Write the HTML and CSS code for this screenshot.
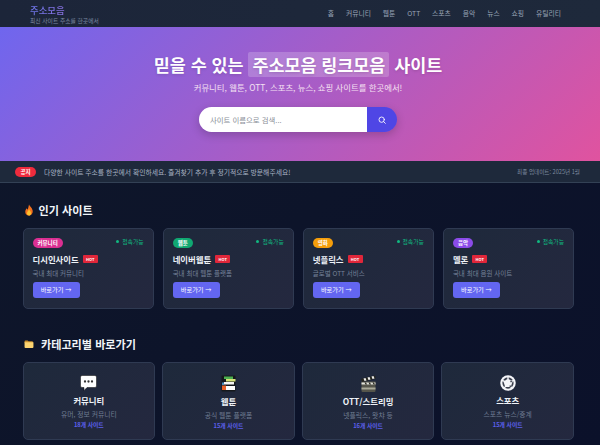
FILE: index.html
```html
<!DOCTYPE html>
<html lang="ko">
<head>
<meta charset="utf-8">
<title>주소모음</title>
<link rel="stylesheet" href="styles.css">
</head>
<body>
<header class="site-header">
  <div class="brand">
    <div class="brand-name">주소모음</div>
    <div class="brand-sub">최신 사이트 주소를 한곳에서</div>
  </div>
  <nav class="nav">
    <a>홈</a><a>커뮤니티</a><a>웹툰</a><a>OTT</a><a>스포츠</a><a>음악</a><a>뉴스</a><a>쇼핑</a><a>유틸리티</a>
  </nav>
</header>
<section class="hero">
  <h1 class="hero-title">믿을 수 있는 <span class="hl">주소모음 링크모음</span> 사이트</h1>
  <p class="hero-sub">커뮤니티, 웹툰, OTT, 스포츠, 뉴스, 쇼핑 사이트를 한곳에서!</p>
  <div class="search">
    <div class="search-input">사이트 이름으로 검색...</div>
    <div class="search-btn">
      <svg width="8" height="8" viewBox="0 0 24 24" fill="none" stroke="#fff" stroke-width="2.600" stroke-linecap="round"><circle cx="11" cy="11" r="8"/><path d="M17 17l5 5"/></svg>
    </div>
  </div>
</section>
<div class="notice">
  <div class="notice-left"><span class="notice-badge">공지</span><span class="notice-text">다양한 사이트 주소를 한곳에서 확인하세요. 즐겨찾기 추가 후 정기적으로 방문해주세요!</span></div>
  <span class="notice-date">최종 업데이트: 2025년 1월</span>
</div>
<main class="main">
  <h2 class="section-title pop-title">
    <svg class="sec-icon" width="10" height="12" viewBox="0 0 22 24"><path fill="#f4721e" d="M11 0c1 4 7 7 8 13 1 6-3 11-8 11S2 20 3 14c.5-3 2-4 3-6 1 1.500 1.500 2.500 2 3.500C9.500 8 10 4 11 0z"/><path fill="#fbc02d" d="M11 10c1 3 4.500 5 4.500 9s-2 5-4.500 5-4.500-2-4.500-5 3.500-5 4.500-9z"/></svg>
    인기 사이트
  </h2>
  <div class="pop-grid">
    <article class="pop-card">
      <div class="pop-top"><span class="tag tag-pink">커뮤니티</span><span class="status"><i class="dot"></i>접속가능</span></div>
      <div class="pop-name">디시인사이드<span class="hot">HOT</span></div>
      <p class="pop-desc">국내 최대 커뮤니티</p>
      <a class="go">바로가기 →</a>
    </article>
    <article class="pop-card">
      <div class="pop-top"><span class="tag tag-green">웹툰</span><span class="status"><i class="dot"></i>접속가능</span></div>
      <div class="pop-name">네이버웹툰<span class="hot">HOT</span></div>
      <p class="pop-desc">국내 최대 웹툰 플랫폼</p>
      <a class="go">바로가기 →</a>
    </article>
    <article class="pop-card">
      <div class="pop-top"><span class="tag tag-amber">영화</span><span class="status"><i class="dot"></i>접속가능</span></div>
      <div class="pop-name">넷플릭스<span class="hot">HOT</span></div>
      <p class="pop-desc">글로벌 OTT 서비스</p>
      <a class="go">바로가기 →</a>
    </article>
    <article class="pop-card">
      <div class="pop-top"><span class="tag tag-purple">음악</span><span class="status"><i class="dot"></i>접속가능</span></div>
      <div class="pop-name">멜론<span class="hot">HOT</span></div>
      <p class="pop-desc">국내 최대 음원 사이트</p>
      <a class="go">바로가기 →</a>
    </article>
  </div>
  <h2 class="section-title cat-title">
    <svg class="sec-icon" width="10" height="8" viewBox="0 0 22 18"><path fill="#c98f2c" d="M1 3a2 2 0 0 1 2-2h5l2 2h8a2 2 0 0 1 2 2v2H1z"/><path fill="#fcd470" d="M1 5h20v11a2 2 0 0 1-2 2H3a2 2 0 0 1-2-2z"/></svg>
    카테고리별 바로가기
  </h2>
  <div class="cat-grid">
    <article class="cat-card">
      <svg class="cat-icon" width="17" height="16" viewBox="0 0 34 32"><path fill="#fff" stroke="#0b0b0b" stroke-width="1" d="M4 1h26a3 3 0 0 1 3 3v18a3 3 0 0 1-3 3H14l-6 6v-6H4a3 3 0 0 1-3-3V4a3 3 0 0 1 3-3z"/><circle cx="10" cy="13" r="2.300" fill="#333"/><circle cx="17" cy="13" r="2.300" fill="#333"/><circle cx="24" cy="13" r="2.300" fill="#333"/></svg>
      <div class="cat-name">커뮤니티</div>
      <p class="cat-desc">유머, 정보 커뮤니티</p>
      <div class="cat-count">18개 사이트</div>
    </article>
    <article class="cat-card">
      <svg class="cat-icon" width="17" height="17" viewBox="0 0 34 34"><rect x="3" y="1" width="28" height="32" rx="2" fill="#15181c"/><rect x="8" y="3" width="18" height="5" fill="#4caf50"/><rect x="12" y="8" width="19" height="5" fill="#d7e37c"/><rect x="8" y="14" width="20" height="5" fill="#f4f4f4"/><rect x="4" y="15" width="4" height="5" fill="#4a90c2"/><rect x="4" y="21" width="8" height="9" fill="#e8632a"/><rect x="12" y="22" width="18" height="8" fill="#fff"/></svg>
      <div class="cat-name">웹툰</div>
      <p class="cat-desc">공식 웹툰 플랫폼</p>
      <div class="cat-count">15개 사이트</div>
    </article>
    <article class="cat-card">
      <svg class="cat-icon" width="17" height="17" viewBox="0 0 34 34"><path fill="#55554b" d="M3 13h28v19a2 2 0 0 1-2 2H5a2 2 0 0 1-2-2z"/><path fill="#a9a998" d="M3 25h28v4H3z"/><path fill="#26261f" d="M2 8L30 1l1.500 6L4 14z"/><path fill="#eee" d="M7 7l4-1 2 5-4 1zM15 5l4-1 2 5-4 1zM23 3l4-1 2 5-4 1z"/><path fill="#e4e4dc" d="M3 15h28v4H3z"/><path fill="#26261f" d="M9 15h3l2 4h-3zM17 15h3l2 4h-3zM25 15h3l2 4h-3z"/></svg>
      <div class="cat-name">OTT/스트리밍</div>
      <p class="cat-desc">넷플릭스, 왓챠 등</p>
      <div class="cat-count">16개 사이트</div>
    </article>
    <article class="cat-card">
      <svg class="cat-icon" width="16" height="16" viewBox="0 0 34 34"><circle cx="17" cy="17" r="16.500" fill="#f5f6fa"/><circle cx="17" cy="17" r="12" fill="#3a3f4d"/><path fill="#f5f6fa" d="M17 7.500l9.500 6.900-3.600 11.100H11.100L7.500 14.400zM15.500 2h3v8h-3zM3 12l1.500-2.500 8 4-1.500 2.500zM31 12l-1.500-2.500-8 4 1.500 2.500zM8.500 30.500L6 29l6-7 2.500 1.500zM25.500 30.500L28 29l-6-7-2.500 1.500z"/></svg>
      <div class="cat-name">스포츠</div>
      <p class="cat-desc">스포츠 뉴스/중계</p>
      <div class="cat-count">15개 사이트</div>
    </article>
  </div>
</main>
</body>
</html>
```
FILE: styles.css
```css
* { box-sizing: border-box; margin: 0; padding: 0; }
html, body { height: 445px; overflow: hidden; }
body {
  font-family: "Noto Sans CJK KR", "Noto Sans", sans-serif;
  background: linear-gradient(135deg, #0f172a, #0b112a);
  color: #f1f5f9;
}
.site-header {
  height: 27px;
  background: linear-gradient(90deg, #1c2539, #1e293b);
  display: flex;
  align-items: center;
  justify-content: space-between;
  padding: 0 39px 0 30px;
}
.brand { padding-top: 1px; }
.brand-name {
  font-size: 9.400px;
  line-height: 11px;
  font-weight: 500;
  background: linear-gradient(90deg, #6f78ee, #a66bd8);
  -webkit-background-clip: text;
  background-clip: text;
  color: transparent;
}
.brand-sub { font-size: 5.800px; line-height: 7px; margin-top: 1px; color: #7c8aa0; }
.nav { display: flex; gap: 11.900px; }
.nav a { font-size: 6.800px; color: #98a3b5; line-height: 9px; }
.hero {
  height: 134px;
  background: linear-gradient(135deg, #6f66ee, #e0539f);
  display: flex;
  flex-direction: column;
  align-items: center;
  padding: 26px 4px 0 0;
}
.hero-title {
  font-size: 17.400px;
  line-height: 24px;
  font-weight: 700;
  color: #fff;
  text-shadow: 0 1px 3px rgba(0,0,0,.15);
}
.hl {
  background: rgba(255,255,255,.2);
  padding: 0 4px;
  border-radius: 2px;
}
.hero-sub { font-size: 8.400px; line-height: 11px; margin-top: 5px; color: #f5e0f2; }
.search {
  margin-top: 14px;
  width: 198px;
  height: 25px;
  display: flex;
  border-radius: 13px;
  overflow: hidden;
  box-shadow: 0 3px 10px rgba(0,0,0,.2);
}
.search-input {
  flex: 1;
  background: #fff;
  color: #8a8f98;
  font-size: 7.400px;
  line-height: 25px;
  padding-left: 11px;
}
.search-btn {
  width: 30px;
  background: #4f46e5;
  display: flex;
  align-items: center;
  justify-content: center;
}
.notice {
  height: 22px;
  background: #1e293b;
  border-bottom: 1px solid #334155;
  display: flex;
  align-items: center;
  justify-content: space-between;
  padding: 0 20px 0 15px;
}
.notice-left { display: flex; align-items: center; gap: 8px; }
.notice-badge {
  width: 21px;
  height: 10px;
  border-radius: 5px;
  background: #ef2b3d;
  font-size: 5.500px;
  line-height: 10px;
  font-weight: 700;
  text-align: center;
  color: #fff;
}
.notice-text { font-size: 6.800px; color: #a8b3c3; }
.notice-date { font-size: 5.600px; color: #7f8ca0; }
.main { padding: 0 26px 0 22.500px; }
.section-title {
  display: flex;
  align-items: center;
  font-size: 11.100px;
  line-height: 14px;
  font-weight: 700;
  color: #f1f5f9;
}
.pop-title { margin: 20px 0 11px; padding-left: 1px; gap: 5px; }
.cat-title { margin: 28px 0 11px; padding-left: 1px; gap: 7.500px; }
.pop-grid { display: grid; grid-template-columns: repeat(4, 1fr); gap: 9px; }
.pop-card {
  height: 80.500px;
  border: 1px solid #2f3a52;
  border-radius: 5px;
  background: linear-gradient(135deg, #1e293b, #24283f);
  padding: 8.500px 9px 0;
}
.pop-top { display: flex; justify-content: space-between; align-items: flex-start; height: 10px; }
.tag {
  font-size: 5.500px;
  line-height: 10px;
  height: 10px;
  padding: 0 5px;
  border-radius: 5px;
  font-weight: 700;
  color: #fff;
}
.tag-pink { background: #db2f92; }
.tag-green { background: #10a872; }
.tag-amber { background: #f59e0b; }
.tag-purple { background: #8b4be8; }
.status { display: flex; align-items: center; gap: 3px; font-size: 5.800px; line-height: 6px; color: #10b981; margin-top: 1px; }
.dot { display: block; width: 3px; height: 3px; border-radius: 50%; background: #10b981; }
.pop-name {
  display: flex;
  align-items: center;
  font-size: 8.400px;
  line-height: 12px;
  font-weight: 700;
  color: #eef2f7;
  margin-top: 5px;
}
.hot {
  margin-left: 4px;
  width: 15px;
  height: 8px;
  border-radius: 1px;
  background: #e0263a;
  font-size: 4px;
  line-height: 8px;
  text-align: center;
  color: #fff;
}
.pop-desc { font-size: 6.500px; line-height: 8px; margin-top: 4.500px; color: #76839a; }
.go {
  display: block;
  width: 47px;
  height: 16px;
  margin-top: 4.500px;
  border-radius: 3px;
  background: #6366f1;
  font-size: 6.200px;
  line-height: 15px;
  text-align: center;
  color: #fff;
}
.cat-grid { display: grid; grid-template-columns: repeat(4, 1fr); gap: 7px; }
.cat-card {
  height: 78px;
  border: 1px solid #2f3a52;
  border-radius: 5px;
  background: linear-gradient(135deg, #1e293b, #24283f);
  display: flex;
  flex-direction: column;
  align-items: center;
  padding-top: 12px;
}
.cat-icon { display: block; }
.cat-name { font-size: 8.400px; line-height: 11px; font-weight: 700; color: #eef2f7; margin-top: 4.500px; }
.cat-desc { font-size: 6.800px; line-height: 8px; margin-top: 3.500px; color: #6f7c92; }
.cat-count { font-size: 5.800px; line-height: 7px; margin-top: 3.500px; font-weight: 700; color: #5c60ee; }
```
